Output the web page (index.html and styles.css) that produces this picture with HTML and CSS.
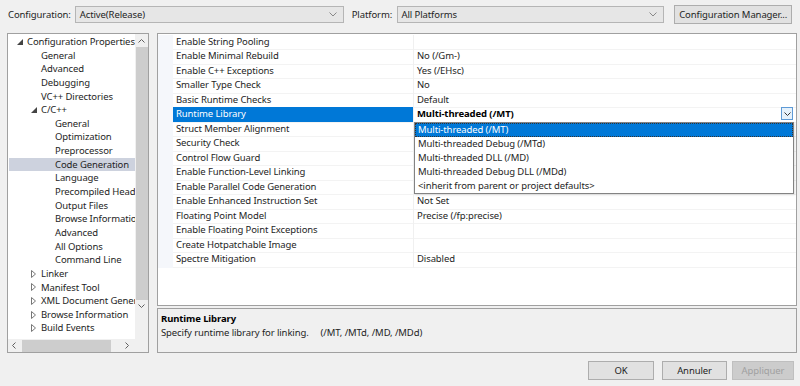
FILE: index.html
```html
<!DOCTYPE html>
<html lang="en">
<head>
  <meta charset="UTF-8" />
  <title>Code Generation Property Pages</title>
  <link rel="stylesheet" href="styles.css">
</head>
<body>
  <div class="dialog">
    <div class="toolbar">
      <span class="tb-label">Configuration:</span>
      <div class="combo combo-config">
        <span>Active(Release)</span>
        <svg class="chev" width="8" height="5" viewBox="0 0 8 5"><path d="M0.5 0.5 L4 4 L7.5 0.5" fill="none" stroke="#888" stroke-width="1"/></svg>
      </div>
      <span class="tb-label tb-platform">Platform:</span>
      <div class="combo combo-platform">
        <span>All Platforms</span>
        <svg class="chev" width="8" height="5" viewBox="0 0 8 5"><path d="M0.5 0.5 L4 4 L7.5 0.5" fill="none" stroke="#888" stroke-width="1"/></svg>
      </div>
      <button class="btn btn-manager">Configuration Manager...</button>
    </div>

    <div class="main">
      <!-- category tree -->
      <div class="tree">
        <ul class="tree-list">
          <li class="lvl0"><span class="exp"><svg width="6" height="6" viewBox="0 0 6 6"><path d="M6 0 L6 6 L0 6 Z" fill="#444"/></svg></span>Configuration Properties</li>
          <li class="lvl1">General</li>
          <li class="lvl1">Advanced</li>
          <li class="lvl1">Debugging</li>
          <li class="lvl1">VC++ Directories</li>
          <li class="lvl1 has-exp"><span class="exp"><svg width="6" height="6" viewBox="0 0 6 6"><path d="M6 0 L6 6 L0 6 Z" fill="#444"/></svg></span>C/C++</li>
          <li class="lvl2">General</li>
          <li class="lvl2">Optimization</li>
          <li class="lvl2">Preprocessor</li>
          <li class="lvl2 selected">Code Generation</li>
          <li class="lvl2">Language</li>
          <li class="lvl2">Precompiled Headers</li>
          <li class="lvl2">Output Files</li>
          <li class="lvl2">Browse Information</li>
          <li class="lvl2">Advanced</li>
          <li class="lvl2">All Options</li>
          <li class="lvl2">Command Line</li>
          <li class="lvl1 has-exp"><span class="exp"><svg width="5" height="8" viewBox="0 0 5 8"><path d="M0.5 0.5 L4.5 4 L0.5 7.5 Z" fill="none" stroke="#777" stroke-width="1"/></svg></span>Linker</li>
          <li class="lvl1 has-exp"><span class="exp"><svg width="5" height="8" viewBox="0 0 5 8"><path d="M0.5 0.5 L4.5 4 L0.5 7.5 Z" fill="none" stroke="#777" stroke-width="1"/></svg></span>Manifest Tool</li>
          <li class="lvl1 has-exp"><span class="exp"><svg width="5" height="8" viewBox="0 0 5 8"><path d="M0.5 0.5 L4.5 4 L0.5 7.5 Z" fill="none" stroke="#777" stroke-width="1"/></svg></span>XML Document Generator</li>
          <li class="lvl1 has-exp"><span class="exp"><svg width="5" height="8" viewBox="0 0 5 8"><path d="M0.5 0.5 L4.5 4 L0.5 7.5 Z" fill="none" stroke="#777" stroke-width="1"/></svg></span>Browse Information</li>
          <li class="lvl1 has-exp"><span class="exp"><svg width="5" height="8" viewBox="0 0 5 8"><path d="M0.5 0.5 L4.5 4 L0.5 7.5 Z" fill="none" stroke="#777" stroke-width="1"/></svg></span>Build Events</li>
        </ul>
        <div class="vscroll">
          <svg width="7" height="4" viewBox="0 0 7 4"><path d="M0.5 3.5 L3.5 0.5 L6.5 3.5" fill="none" stroke="#606060"/></svg>
          <div class="vthumb"></div>
          <svg width="7" height="4" viewBox="0 0 7 4"><path d="M0.5 0.5 L3.5 3.5 L6.5 0.5" fill="none" stroke="#606060"/></svg>
        </div>
        <div class="hscroll">
          <svg width="4" height="7" viewBox="0 0 4 7"><path d="M3.5 0.5 L0.5 3.5 L3.5 6.5" fill="none" stroke="#606060"/></svg>
          <div class="hthumb"></div>
          <svg width="4" height="7" viewBox="0 0 4 7"><path d="M0.5 0.5 L3.5 3.5 L0.5 6.5" fill="none" stroke="#606060"/></svg>
        </div>
        <div class="corner"></div>
      </div>

      <div class="right">
        <!-- property grid -->
        <div class="props">
          <div class="row"><span class="gut"></span><span class="name">Enable String Pooling</span><span class="val"></span></div>
          <div class="row"><span class="gut"></span><span class="name">Enable Minimal Rebuild</span><span class="val">No (/Gm-)</span></div>
          <div class="row"><span class="gut"></span><span class="name">Enable C++ Exceptions</span><span class="val">Yes (/EHsc)</span></div>
          <div class="row"><span class="gut"></span><span class="name">Smaller Type Check</span><span class="val">No</span></div>
          <div class="row"><span class="gut"></span><span class="name">Basic Runtime Checks</span><span class="val">Default</span></div>
          <div class="row active"><span class="gut"></span><span class="name">Runtime Library</span><span class="val">Multi-threaded (/MT)
            <span class="drop-btn"><svg width="7" height="4" viewBox="0 0 7 4"><path d="M0.5 0.5 L3.5 3.5 L6.5 0.5" fill="none" stroke="#333"/></svg></span></span></div>
          <div class="row"><span class="gut"></span><span class="name">Struct Member Alignment</span><span class="val"></span></div>
          <div class="row"><span class="gut"></span><span class="name">Security Check</span><span class="val"></span></div>
          <div class="row"><span class="gut"></span><span class="name">Control Flow Guard</span><span class="val"></span></div>
          <div class="row"><span class="gut"></span><span class="name">Enable Function-Level Linking</span><span class="val"></span></div>
          <div class="row"><span class="gut"></span><span class="name">Enable Parallel Code Generation</span><span class="val"></span></div>
          <div class="row"><span class="gut"></span><span class="name">Enable Enhanced Instruction Set</span><span class="val">Not Set</span></div>
          <div class="row"><span class="gut"></span><span class="name">Floating Point Model</span><span class="val">Precise (/fp:precise)</span></div>
          <div class="row"><span class="gut"></span><span class="name">Enable Floating Point Exceptions</span><span class="val"></span></div>
          <div class="row"><span class="gut"></span><span class="name">Create Hotpatchable Image</span><span class="val"></span></div>
          <div class="row"><span class="gut"></span><span class="name">Spectre Mitigation</span><span class="val">Disabled</span></div>

          <ul class="dropdown">
            <li class="picked">Multi-threaded (/MT)</li>
            <li>Multi-threaded Debug (/MTd)</li>
            <li>Multi-threaded DLL (/MD)</li>
            <li>Multi-threaded Debug DLL (/MDd)</li>
            <li>&lt;inherit from parent or project defaults&gt;</li>
          </ul>
        </div>

        <div class="desc">
          <div class="desc-title">Runtime Library</div>
          <div class="desc-text">Specify runtime library for linking.&nbsp;&nbsp;&nbsp;&nbsp;&nbsp;(/MT, /MTd, /MD, /MDd)</div>
        </div>
      </div>
    </div>

    <div class="footer">
      <button class="btn btn-foot btn-ok">OK</button>
      <button class="btn btn-foot btn-cancel">Annuler</button>
      <button class="btn btn-foot btn-apply">Appliquer</button>
    </div>
  </div>
</body>
</html>
```

FILE: styles.css
```css
body {
  margin: 0;
  background: #f0f0f0;
  font-family: 'Noto Sans', 'Open Sans', sans-serif;
  font-size: 9.5px;
  letter-spacing: -0.1px;
  color: #1e1e1e;
}
.dialog {
  width: 800px;
  height: 386px;
  overflow: hidden;
}
ul {
  list-style: none;
  margin: 0;
  padding: 0;
}

/* top bar */
.toolbar {
  display: flex;
  align-items: center;
  height: 19px;
  padding: 5px 8px 0 8px;
}
.tb-label {
  width: 67px;
}
.tb-platform {
  width: 45px;
  margin-left: 8px;
}
.combo {
  display: flex;
  align-items: center;
  justify-content: space-between;
  height: 17px;
  box-sizing: border-box;
  border: 1px solid #b5b5b5;
  background: #e6e6e6;
  padding: 0 6px 0 4px;
}
.combo-config { width: 270px; }
.combo-platform { width: 269px; }
.btn {
  font-family: inherit;
  font-size: 9.5px;
  letter-spacing: -0.1px;
  color: #1e1e1e;
  background: #e1e1e1;
  border: 1px solid #adadad;
  padding: 0;
  box-sizing: border-box;
  white-space: nowrap;
}
.btn-manager {
  margin-left: 10px;
  width: 118px;
  height: 19px;
}

/* main area */
.main {
  display: flex;
  margin: 9px 0 0 7px;
  height: 320px;
}
.tree {
  width: 142px;
  box-sizing: border-box;
  border: 1px solid #a0a0a0;
  background: #fff;
  display: grid;
  grid-template-columns: 1fr 13px;
  grid-template-rows: 1fr 13px;
  overflow: hidden;
}
.tree-list {
  padding-top: 1px;
  overflow: hidden;
  white-space: nowrap;
}
.tree-list li {
  height: 13.65px;
  line-height: 13.65px;
  display: flex;
  align-items: center;
}
.tree-list .exp {
  width: 10px;
  flex-shrink: 0;
  display: flex;
  align-items: center;
  justify-content: flex-start;
}
.lvl0 { padding-left: 9px; }
.lvl1 { padding-left: 33px; }
.lvl1.has-exp { padding-left: 23px; }
.lvl2 { padding-left: 47px; }
.tree-list .selected {
  background: #cdd2de;
  margin-left: 1px;
  padding-left: 46px;
}
.vscroll {
  background: #f0f0f0;
  display: flex;
  flex-direction: column;
  align-items: center;
  padding: 5px 0 3px 0;
  gap: 4px;
}
.vthumb {
  width: 12px;
  height: 253px;
  background: #cdcdcd;
}
.hscroll {
  background: #f0f0f0;
  display: flex;
  align-items: center;
  padding: 0 5px 0 4px;
}
.hthumb {
  width: 89px;
  height: 12px;
  margin: 0 14px 0 6px;
  background: #cdcdcd;
}
.corner {
  background: #f0f0f0;
}

.right {
  margin-left: 8px;
  width: 640px;
  display: flex;
  flex-direction: column;
}
.props {
  position: relative;
  height: 273px;
  box-sizing: border-box;
  border: 1px solid #a0a0a0;
  background: #fff;
  padding-top: 1px;
}
.row {
  display: grid;
  grid-template-columns: 15px 241px 1fr;
  height: 14.47px;
  line-height: 14.47px;
}
.row .gut {
  background: #f5f7fb;
}
.row .name {
  padding-left: 3px;
  border-bottom: 1px solid #f3f3f3;
  border-right: 1px solid #f0f0f0;
  white-space: nowrap;
}
.row .val {
  padding-left: 3px;
  border-bottom: 1px solid #f3f3f3;
  position: relative;
}
.row.active .name {
  background: #0078d7;
  color: #fff;
}
.row.active .val {
  font-weight: bold;
  color: #000;
}
.drop-btn {
  position: absolute;
  right: 3px;
  top: 0;
  width: 12px;
  height: 13px;
  box-sizing: border-box;
  border: 1px solid #5e9ad6;
  background: #e5f1fb;
  display: flex;
  align-items: center;
  justify-content: center;
}
.dropdown {
  position: absolute;
  left: 256px;
  top: 88px;
  width: 380px;
  box-sizing: border-box;
  border: 1px solid #838383;
  background: #fff;
  box-shadow: 1px 1px 2px rgba(0,0,0,0.12);
}
.dropdown li {
  height: 14px;
  line-height: 14px;
  padding-left: 3px;
}
.dropdown .picked {
  background: #0078d7;
  color: #fff;
  outline: 1px dotted #333;
  outline-offset: -1px;
}

.desc {
  margin-top: 2px;
  height: 45px;
  box-sizing: border-box;
  border: 1px solid #a0a0a0;
  background: #f0f0f0;
  padding: 3px 3px 0 3px;
  line-height: 14px;
}
.desc-title {
  font-weight: bold;
  color: #000;
}

/* bottom buttons */
.footer {
  display: flex;
  justify-content: flex-end;
  margin: 8px 6px 0 0;
}
.btn-foot {
  height: 19px;
}
.btn-ok { width: 66px; }
.btn-cancel {
  width: 65px;
  margin-left: 8px;
}
.btn-apply {
  width: 62px;
  margin-left: 5px;
  color: #a0a0a0;
  background: #cccccc;
  border-color: #bfbfbf;
}
```
